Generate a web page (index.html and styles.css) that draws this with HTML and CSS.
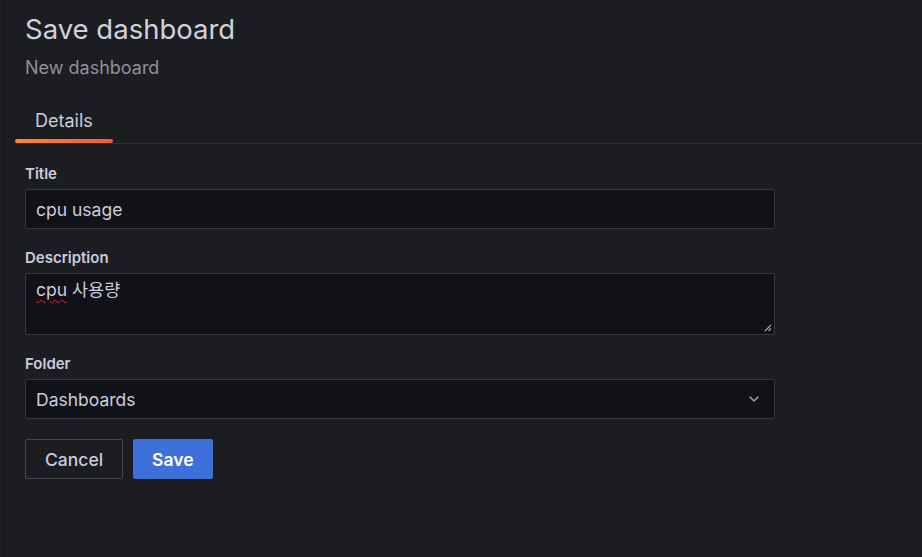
FILE: index.html
```html
<!DOCTYPE html>
<html lang="en">
<head>
<meta charset="utf-8">
<title>Save dashboard</title>
<link rel="stylesheet" href="styles.css">
</head>
<body>
<div class="drawer">
  <header class="header">
    <h1 class="title">Save dashboard</h1>
    <div class="subtitle">New dashboard</div>
  </header>
  <nav class="tabs">
    <div class="tab active">Details</div>
  </nav>
  <form class="form">
    <div class="field">
      <label class="label">Title</label>
      <div class="input">cpu usage</div>
    </div>
    <div class="field">
      <label class="label">Description</label>
      <div class="textarea"><span class="misspelled">cpu</span> 사용량
        <svg class="resize" width="8" height="8" viewBox="0 0 8 8"><path d="M7 1 L1 7 M7 4.5 L4.5 7" stroke="#a0a0a8" stroke-width="1.3" fill="none"/></svg>
      </div>
    </div>
    <div class="field">
      <label class="label">Folder</label>
      <div class="select">
        <span>Dashboards</span>
        <svg class="chevron" width="12" height="8" viewBox="0 0 12 8"><path d="M2 2 L6 6 L10 2" stroke="#9a9ba4" stroke-width="1.6" fill="none" stroke-linecap="round" stroke-linejoin="round"/></svg>
      </div>
    </div>
    <div class="actions">
      <button type="button" class="btn btn-secondary">Cancel</button>
      <button type="button" class="btn btn-primary">Save</button>
    </div>
  </form>
</div>
</body>
</html>
```
FILE: styles.css
```css
* { box-sizing: border-box; }
html, body {
  margin: 0;
  height: 100%;
  background: #1a1b1f;
}
body {
  font-family: Inter, "Noto Sans CJK KR", "Liberation Sans", sans-serif;
  color: #ccccdc;
  overflow: hidden;
}
.drawer {
  margin-left: 4px;
  height: 557px;
  border-left: 1px solid #16171a;
  background: #1b1d21;
}
.header {
  padding: 12px 20px 0 20px;
}
.title {
  margin: 0;
  font-size: 27.5px;
  line-height: 34px;
  font-weight: 400;
  color: #d0d0de;
}
.subtitle {
  margin-top: 11px;
  font-size: 18px;
  line-height: 22px;
  color: #8f9099;
}
.tabs {
  margin-top: 20px;
  margin-left: 10px;
  display: flex;
  border-bottom: 1px solid #2c2e33;
}
.tab {
  position: relative;
  padding: 12px 20px;
  font-size: 18px;
  line-height: 20px;
  color: #ccccdc;
}
.tab.active::after {
  content: "";
  position: absolute;
  left: 0;
  right: 0;
  bottom: 0;
  height: 4px;
  border-radius: 2px;
  background: linear-gradient(90deg, #ff8833, #f05a3a);
}
.form {
  padding: 21px 0 0 20px;
  width: 770px;
  display: flex;
  flex-direction: column;
  gap: 20px;
}
.field {
  display: flex;
  flex-direction: column;
}
.label {
  font-size: 15px;
  line-height: 17px;
  font-weight: 600;
  color: #ccccdc;
  margin-bottom: 7px;
}
.input, .textarea, .select {
  background: #111217;
  border: 1px solid #36383e;
  border-radius: 2px;
  font-size: 17.5px;
  color: #ccccdc;
  padding: 0 10px;
}
.input, .select {
  height: 40px;
  line-height: 39px;
}
.textarea {
  position: relative;
  height: 62px;
  padding-top: 5px;
  line-height: 22px;
}
.misspelled {
  text-decoration: underline wavy #e0202a;
  text-decoration-thickness: 1px;
  text-underline-offset: 3px;
}
.resize {
  position: absolute;
  right: 2px;
  bottom: 2px;
}
.select {
  display: flex;
  align-items: center;
  justify-content: space-between;
  padding-right: 14px;
}
.actions {
  display: flex;
  gap: 10px;
}
.btn {
  height: 40px;
  font-family: inherit;
  font-size: 17.5px;
  font-weight: 500;
  border-radius: 2px;
  padding: 0 19px;
  cursor: pointer;
}
.btn-secondary {
  background: transparent;
  border: 1px solid #45474d;
  color: #ccccdc;
}
.btn-primary {
  background: #3d71d9;
  border: 1px solid #3d71d9;
  color: #ffffff;
  font-weight: 600;
  padding: 0 18px;
}
```
